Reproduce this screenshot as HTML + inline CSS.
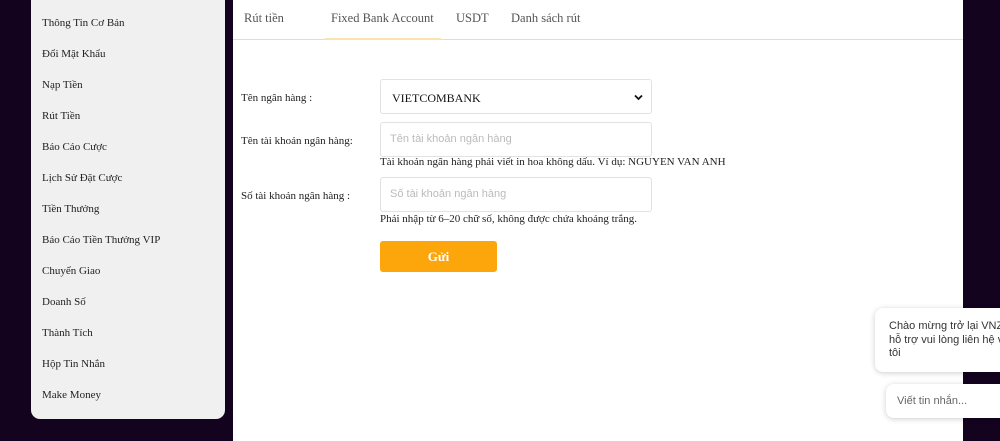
<!DOCTYPE html>
<html><head><meta charset="utf-8"><style>
*{margin:0;padding:0;box-sizing:border-box}
body{width:1000px;height:441px;background:#14031f;position:relative;overflow:hidden;font-family:"Liberation Serif",serif;color:#222}
.side{position:absolute;left:31px;top:0;width:194px;height:419px;background:#f0f0f0;border-radius:0 0 9px 9px}
.side div{position:absolute;left:11px;font-size:11px;color:#222}
.main{position:absolute;left:233px;top:0;width:730px;height:441px;background:#fff}
.tabs{height:40px;border-bottom:1px solid #ddd;position:relative}
.tabs span{position:absolute;top:11px;font-size:12.5px;color:#555}
.ul{position:absolute;left:92px;top:38px;width:116px;height:2px;background:#fbe3b0}
.lbl{position:absolute;font-size:11px;color:#222}
.box{position:absolute;left:147px;width:272px;border:1px solid #e2e2e2;border-radius:3px;background:#fff}
.ph{position:absolute;left:9px;font-family:"Liberation Sans",sans-serif;font-size:11px;color:#bbb}
.hint{position:absolute;left:147px;font-size:11px;color:#222}
.btn{position:absolute;left:147px;top:241px;width:117px;height:31px;background:#fca60b;border-radius:3px;color:#fff;font-weight:bold;font-size:13px;text-align:center;line-height:31px}
.chat{position:absolute;left:875px;top:308px;width:140px;height:64px;background:#fff;border-radius:8px;box-shadow:0 1px 6px rgba(0,0,0,.2);font-family:"Liberation Sans",sans-serif;font-size:11px;color:#333;padding:12px 0 0 14px;line-height:13.5px;white-space:nowrap}
.inp{position:absolute;left:886px;top:384px;width:130px;height:34px;background:#fff;border-radius:8px;box-shadow:0 1px 6px rgba(0,0,0,.2);font-family:"Liberation Sans",sans-serif;font-size:11px;color:#666;padding:11px 0 0 11px}
</style></head><body>
<div class="side">
<div style="top:17px">Thông Tin Cơ Bản</div>
<div style="top:48px">Đổi Mật Khẩu</div>
<div style="top:79px">Nạp Tiền</div>
<div style="top:110px">Rút Tiền</div>
<div style="top:141px">Báo Cáo Cược</div>
<div style="top:172px">Lịch Sử Đặt Cược</div>
<div style="top:203px">Tiền Thưởng</div>
<div style="top:234px">Báo Cáo Tiền Thưởng VIP</div>
<div style="top:265px">Chuyển Giao</div>
<div style="top:296px">Doanh Số</div>
<div style="top:327px">Thành Tích</div>
<div style="top:358px">Hộp Tin Nhắn</div>
<div style="top:389px">Make Money</div>
</div>
<div class="main">
<div class="tabs">
<span style="left:11px">Rút tiền</span>
<span style="left:98px">Fixed Bank Account</span>
<span style="left:223px">USDT</span>
<span style="left:278px">Danh sách rút</span>
<div class="ul"></div>
</div>
<div class="lbl" style="left:8px;top:92px">Tên ngân hàng :</div>
<div class="box" style="top:79px;height:35px"><span style="position:absolute;left:11px;top:11px;font-size:12px;color:#111">VIETCOMBANK</span>
<svg style="position:absolute;right:8px;top:14px" width="9" height="7" viewBox="0 0 9 7"><path d="M1 1.5l3.5 3.5 3.5-3.5" stroke="#111" stroke-width="1.8" fill="none"/></svg></div>
<div class="lbl" style="left:8px;top:135px">Tên tài khoản ngân hàng:</div>
<div class="box" style="top:122px;height:35px"><span class="ph" style="top:10px">Tên tài khoản ngân hàng</span></div>
<div class="hint" style="top:156px">Tài khoản ngân hàng phải viết in hoa không dấu. Ví dụ: NGUYEN VAN ANH</div>
<div class="lbl" style="left:8px;top:190px">Số tài khoản ngân hàng :</div>
<div class="box" style="top:177px;height:35px"><span class="ph" style="top:10px">Số tài khoản ngân hàng</span></div>
<div class="hint" style="top:213px">Phải nhập từ 6–20 chữ số, không được chứa khoảng trắng.</div>
<div class="btn">Gửi</div>
</div>
<div class="chat">Chào mừng trở lại VNZ<br>hỗ trợ vui lòng liên hệ v<br>tôi</div>
<div class="inp">Viết tin nhắn...</div>
</body></html>
